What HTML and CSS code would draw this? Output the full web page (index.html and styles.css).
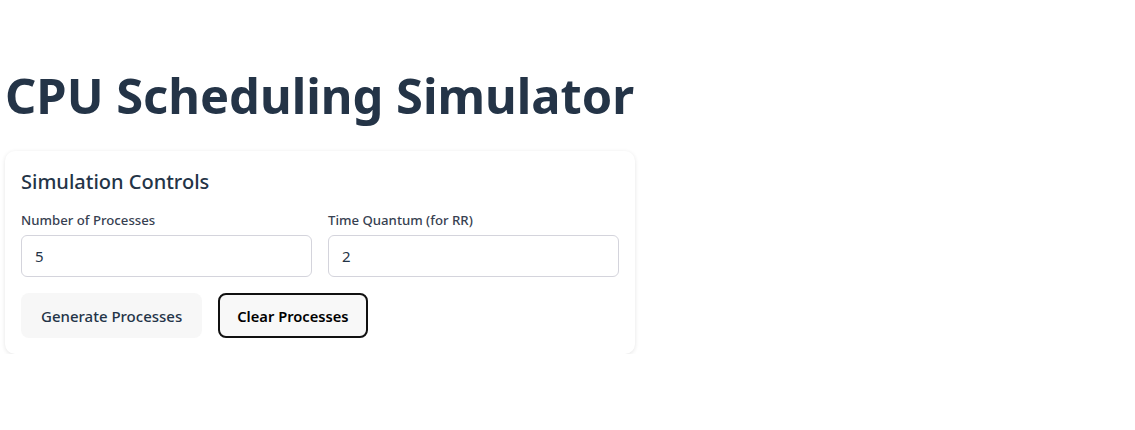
FILE: index.html
```html
<!DOCTYPE html>
<html>
<head>
<meta charset="utf-8">
<link rel="stylesheet" href="styles.css">
</head>
<body>
<div class="app">
  <h1 class="title">CPU Scheduling Simulator</h1>
  <section class="card">
    <h2 class="card-title">Simulation Controls</h2>
    <div class="fields">
      <div class="field">
        <label class="label">Number of Processes</label>
        <input class="input" type="text" value="5">
      </div>
      <div class="field">
        <label class="label">Time Quantum (for RR)</label>
        <input class="input" type="text" value="2">
      </div>
    </div>
    <div class="actions">
      <button class="btn btn-soft">Generate Processes</button>
      <button class="btn btn-outline">Clear Processes</button>
    </div>
  </section>
</div>
</body>
</html>
```
FILE: styles.css
```css
* { box-sizing: border-box; }
body {
  margin: 0;
  background: #ffffff;
  font-family: "Noto Sans", "Open Sans", sans-serif;
  color: #243447;
}
.app {
  width: 640px;
  padding: 0 5px;
}
.title {
  margin: 0;
  padding-top: 63px;
  height: 151px;
  font-size: 48.8px;
  line-height: 64px;
  font-weight: 700;
  color: #243447;
}
.card {
  width: 630px;
  padding: 16px;
  background: #fff;
  border-radius: 10px;
  box-shadow: 0 1px 4px rgba(0,0,0,0.11);
}
.card-title {
  margin: 0 0 15px;
  font-size: 20px;
  line-height: 30px;
  font-weight: 500;
  color: #243447;
}
.fields {
  display: grid;
  grid-template-columns: 1fr 1fr;
  gap: 16px;
}
.field {
  display: flex;
  flex-direction: column;
  gap: 6px;
}
.label {
  font-size: 13.2px;
  line-height: 17px;
  font-weight: 500;
  color: #374151;
}
.input {
  height: 42px;
  border: 1px solid #d4d4dc;
  border-radius: 6px;
  padding: 0 13px;
  font-family: inherit;
  font-size: 15px;
  color: #243447;
}
.actions {
  display: flex;
  gap: 16px;
  margin-top: 16px;
}
.btn {
  height: 45px;
  border-radius: 8px;
  font-family: inherit;
  font-size: 15px;
  padding: 0 20px;
  cursor: pointer;
}
.btn-soft {
  background: #f7f7f7;
  border: none;
  color: #243447;
  font-weight: 500;
}
.btn-outline {
  background: #f8f8f8;
  border: 2px solid #111;
  color: #000;
  font-weight: 600;
  font-size: 14.7px;
  padding: 0 17px;
}
```
